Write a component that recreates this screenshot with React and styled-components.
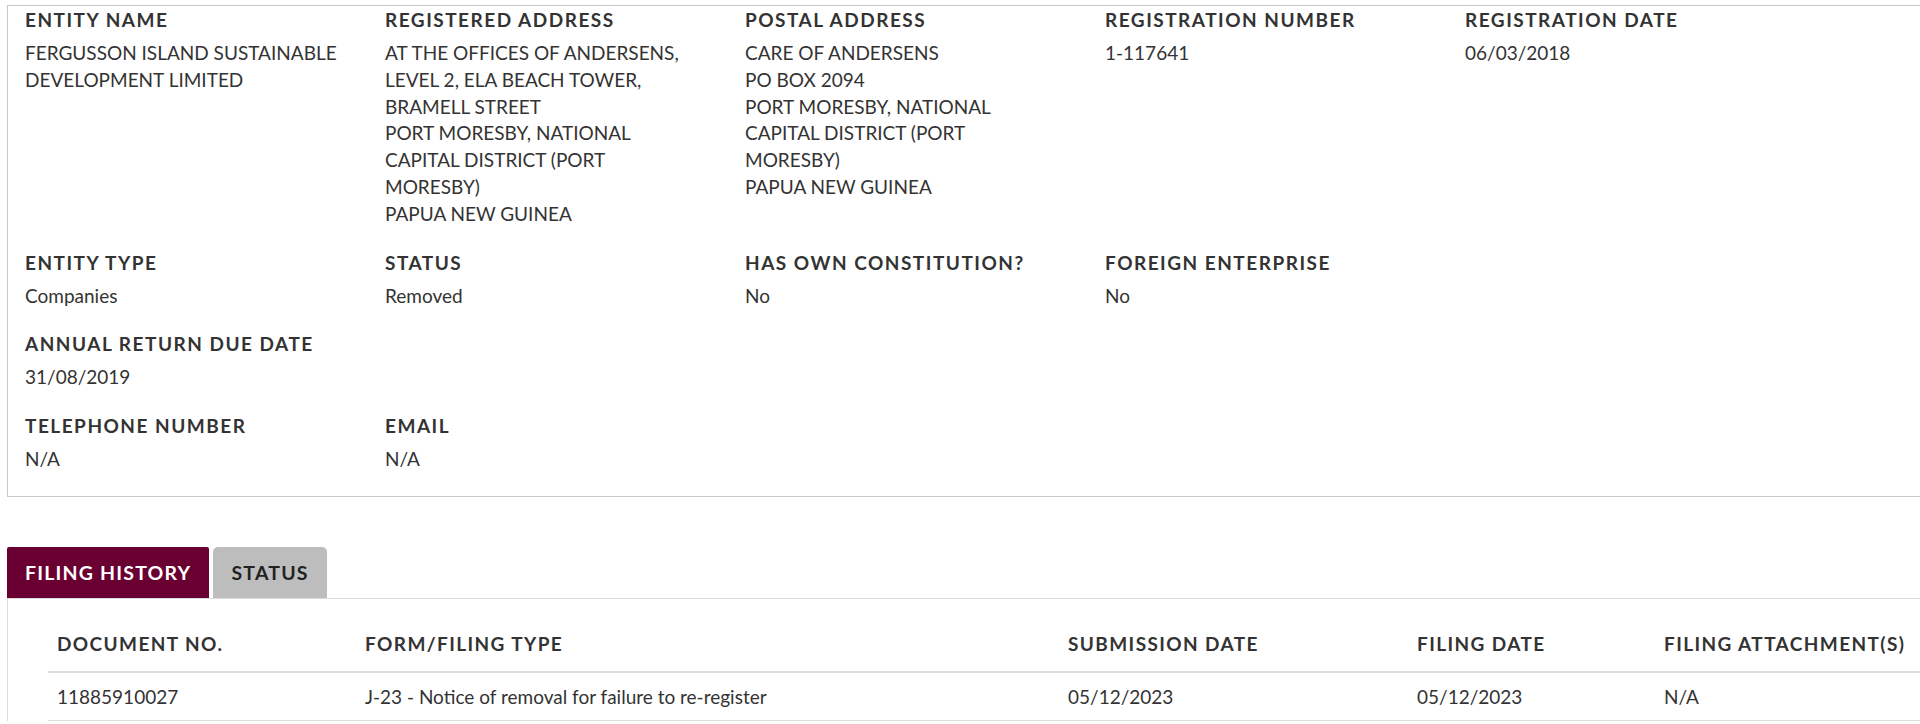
import React from 'react'
import styled, { createGlobalStyle } from 'styled-components'

const GlobalStyle = createGlobalStyle`
  html, body {
    margin: 0;
    padding: 0;
    background: #fff;
    overflow: hidden;
  }
  body {
    font-family: Lato, "Open Sans", Arial, sans-serif;
    color: #333;
  }
`

const Page = styled.div`
  width: 1960px;
  padding: 5px 0 0 7px;
`

const Card = styled.section`
  border: 1px solid #c8c8c8;
  padding: 2px 0 0 17px;
`

const FieldRow = styled.div`
  display: grid;
  grid-template-columns: repeat(5, 360px);
`

const Field = styled.div`
  margin-bottom: 23px;
`

const Label = styled.div`
  font-size: 19px;
  line-height: 24px;
  font-weight: 700;
  letter-spacing: 1.5px;
  text-transform: uppercase;
  color: #333;
  margin-bottom: 8px;
`

const Value = styled.div`
  font-size: 19px;
  line-height: 26.8px;
  color: #333;
  white-space: pre-line;
  max-width: 318px;
`

const Tabs = styled.div`
  margin-top: 50px;
  display: flex;
  gap: 4px;
`

const Tab = styled.button`
  border: 0;
  margin: 0;
  height: 51px;
  padding: 0 18px;
  font-family: inherit;
  font-size: 19.5px;
  font-weight: 700;
  letter-spacing: 1.2px;
  text-transform: uppercase;
  border-radius: ${p => (p.$active ? '2px 2px 0 0' : '5px 5px 0 0')};
  background: ${p => (p.$active ? '#6a0032' : '#bdbdbd')};
  color: ${p => (p.$active ? '#fff' : '#222')};
  cursor: pointer;
`

const Panel = styled.div`
  border-top: 1px solid #dcdcdc;
  border-left: 1px solid #dcdcdc;
  padding: 21px 0 0 40px;
`

const Table = styled.table`
  border-collapse: collapse;
  width: 1880px;
`

const Th = styled.th`
  text-align: left;
  font-size: 19px;
  line-height: 27px;
  font-weight: 700;
  letter-spacing: 1.4px;
  color: #333;
  padding: 10px 9px 14px;
  border-bottom: 2px solid #dddddd;
`

const Td = styled.td`
  font-size: 19px;
  line-height: 27px;
  color: #333;
  padding: 10px 9px;
  border-bottom: 1px solid #dddddd;
`

const rows = [
  [
    ['Entity Name', 'FERGUSSON ISLAND SUSTAINABLE DEVELOPMENT LIMITED'],
    ['Registered Address', 'AT THE OFFICES OF ANDERSENS, LEVEL 2, ELA BEACH TOWER, BRAMELL STREET\nPORT MORESBY, NATIONAL CAPITAL DISTRICT (PORT MORESBY)\nPAPUA NEW GUINEA'],
    ['Postal Address', 'CARE OF ANDERSENS\nPO BOX 2094\nPORT MORESBY, NATIONAL CAPITAL DISTRICT (PORT MORESBY)\nPAPUA NEW GUINEA'],
    ['Registration Number', '1-117641'],
    ['Registration Date', '06/03/2018'],
  ],
  [
    ['Entity Type', 'Companies'],
    ['Status', 'Removed'],
    ['Has Own Constitution?', 'No'],
    ['Foreign Enterprise', 'No'],
  ],
  [['Annual Return Due Date', '31/08/2019']],
  [
    ['Telephone Number', 'N/A'],
    ['Email', 'N/A'],
  ],
]

const columns = [
  ['Document No.', 308],
  ['Form/Filing Type', 703],
  ['Submission Date', 349],
  ['Filing Date', 247],
  ['Filing Attachment(s)', 273],
]

const filings = [
  ['11885910027', 'J-23 - Notice of removal for failure to re-register', '05/12/2023', '05/12/2023', 'N/A'],
]

export default function App() {
  return (
    <Page>
      <GlobalStyle />
      <Card>
        {rows.map((row, i) => (
          <FieldRow key={i}>
            {row.map(([label, value]) => (
              <Field key={label}>
                <Label>{label}</Label>
                <Value>{value}</Value>
              </Field>
            ))}
          </FieldRow>
        ))}
      </Card>

      <Tabs>
        <Tab $active>Filing History</Tab>
        <Tab>Status</Tab>
      </Tabs>
      <Panel>
        <Table>
          <colgroup>
            {columns.map(([name, w]) => (
              <col key={name} style={{ width: w }} />
            ))}
          </colgroup>
          <thead>
            <tr>
              {columns.map(([name]) => (
                <Th key={name}>{name.toUpperCase()}</Th>
              ))}
            </tr>
          </thead>
          <tbody>
            {filings.map(f => (
              <tr key={f[0]}>
                {f.map((cell, j) => (
                  <Td key={j}>{cell}</Td>
                ))}
              </tr>
            ))}
          </tbody>
        </Table>
      </Panel>
    </Page>
  )
}
